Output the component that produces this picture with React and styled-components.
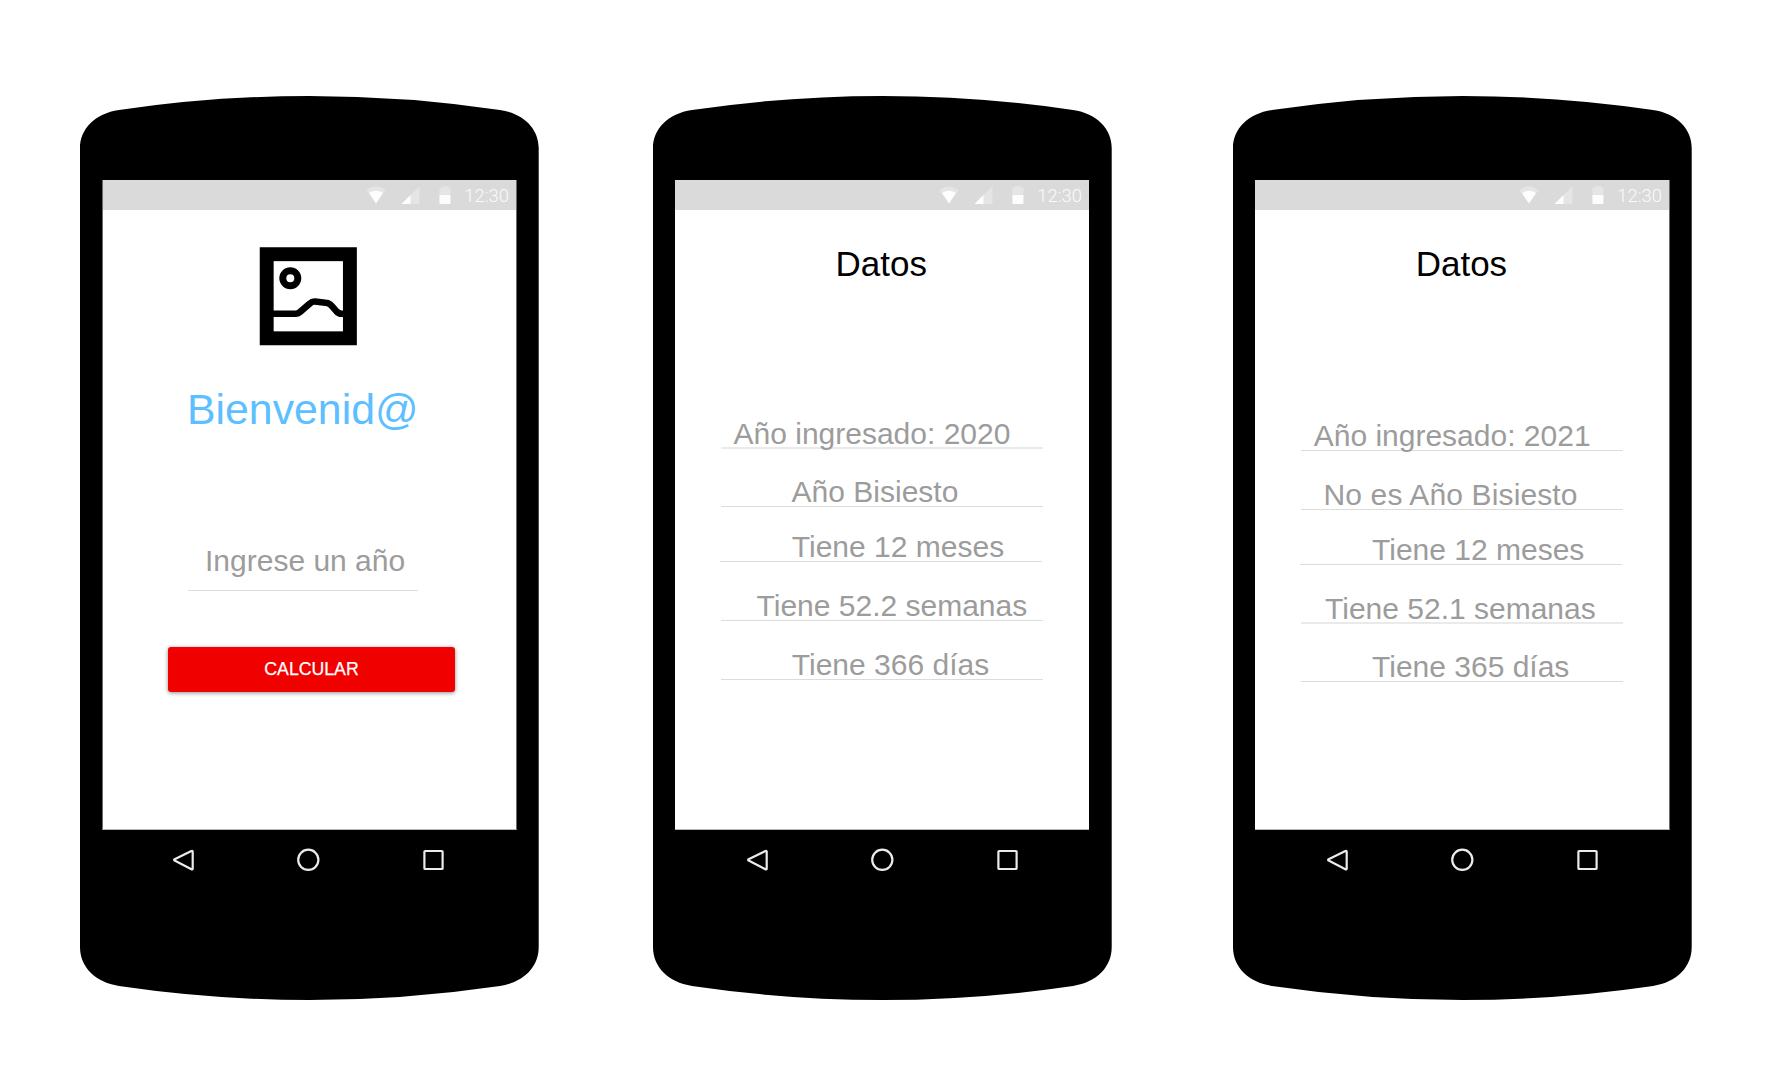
import React from "react";
import styled, { createGlobalStyle } from "styled-components";

const GlobalStyle = createGlobalStyle`
  * { box-sizing: border-box; }
  body { margin: 0; background: #fff; font-family: "Liberation Sans", Arial, sans-serif; }
`;

const Board = styled.main`
  display: flex;
  align-items: flex-start;
  width: 1779px;
  height: 1073px;
  padding: 96px 0 0 80px;
  overflow: hidden;
  background: #fff;
`;

const Phone = styled.section`
  flex: none;
  display: flex;
  flex-direction: column;
  width: 459px;
  height: 904px;
  margin-left: ${(p) => p.$gap}px;
  padding: 84px 0 0 22px;
  background: #000;
  clip-path: path("M0 52 C0 33 15 17.5 39 14 Q134 0 229.4 0 Q325 0 420 14 C444 17.5 458.7 33 458.7 52 V851 C458.7 871 444 886 420 890 Q325 904 229.4 904 Q134 904 39 890 C15 886 0 871 0 851 Z");
`;

const Screen = styled.div`
  display: flex;
  flex-direction: column;
  width: ${(p) => p.$width}px;
  height: 650px;
  background: #fff;
  border: 0 solid #6a6a6a;
  border-left-width: ${(p) => (p.$leftEdge ? 1 : 0)}px;
  border-right-width: ${(p) => (p.$rightEdge ? 1 : 0)}px;
  border-bottom: 1px solid #b5b8b5;
`;

const StatusBar = styled.header`
  flex: none;
  display: flex;
  justify-content: flex-end;
  height: 30px;
  padding: 6px 7px 0 0;
  background: #dadada;
  svg { display: block; flex: none; }
`;

const Signal = styled.svg`
  margin-left: 15px;
`;

const Battery = styled.svg`
  margin-left: 19px;
`;

const Clock = styled.time`
  margin-left: 13px;
  font: 300 18.4px/20px Roboto, sans-serif;
  color: #fafafa;
`;

const Welcome = styled.div`
  display: flex;
  flex-direction: column;
  align-items: flex-start;
`;

const Picture = styled.svg`
  display: block;
  margin: 37px 0 0 156px;
`;

const Greeting = styled.h1`
  margin: 39px 0 0 84px;
  font-size: 42.8px;
  line-height: 48px;
  font-weight: 400;
  color: #5dbfff;
`;

const YearField = styled.div`
  width: 230px;
  height: 47px;
  margin: 111px 0 0 85px;
  padding-left: 17px;
  font-size: 30px;
  line-height: 34px;
  color: #9c9c9c;
  border-bottom: 1px solid #dcdcdc;
`;

const CalculateButton = styled.button`
  width: 287px;
  height: 45px;
  margin: 56px 0 0 65px;
  padding: 0 0 2px;
  border: 0;
  border-radius: 3px;
  background: #f10000;
  box-shadow: 0 1px 4px rgba(0, 0, 0, 0.45);
  font: 400 17.7px/20px "Liberation Sans", Arial, sans-serif;
  -webkit-text-stroke: 0.25px #fff;
  color: #fff;
`;

const Title = styled.h1`
  margin: 34px 0 0 ${(p) => p.$indent}px;
  font-size: 35px;
  line-height: 40px;
  font-weight: 400;
  color: #000;
`;

const Results = styled.div`
  display: flex;
  flex-direction: column;
  padding: ${(p) => p.$top}px 0 0 46px;
`;

const Row = styled.div`
  display: flex;
  align-items: flex-end;
  width: 322.4px;
  height: ${(p) => p.$height}px;
  margin-left: ${(p) => p.$shift || 0}px;
  padding-left: ${(p) => p.$indent}px;
  border-bottom: ${(p) => p.$line}px solid ${(p) => (p.$line === 2 ? "#eaeaea" : "#dcdcdc")};
`;

const Value = styled.span`
  margin-bottom: ${(p) => p.$drop}px;
  font-size: 30px;
  line-height: 34px;
  letter-spacing: ${(p) => p.$spacing || 0}px;
  white-space: nowrap;
  color: #9c9c9c;
`;

const NavBar = styled.nav`
  display: flex;
  padding: 18px 0 0 ${(p) => p.$start}px;
  svg { display: block; }
`;

function Status() {
  return (
    <StatusBar>
      <svg width="20" height="18" viewBox="0 0 20 18" fill="#fff">
        <path d="M0.3 4.2Q10 -3.4 19.7 4.2L10 17.6Z" opacity=".3" />
        <path d="M3.1 7Q10 2.6 16.9 7L10 17.6Z" opacity=".95" />
      </svg>
      <Signal width="19" height="18" viewBox="0 0 19 18" fill="#fff">
        <path d="M0.5 18H18.5V0.3Z" opacity=".3" />
        <path d="M0.5 18H9.5V9.1Z" opacity=".95" />
      </Signal>
      <Battery width="12" height="18" viewBox="0 0 12 18" fill="#fff">
        <path d="M0.4 9V2.6Q0.4 1.4 2.6 1.4V0.3H9.2V1.4Q11.5 1.4 11.5 2.6V9Z" opacity=".3" />
        <path d="M0.4 9H11.5V16.8Q11.5 18 10.3 18H1.6Q0.4 18 0.4 16.8Z" opacity=".95" />
      </Battery>
      <Clock>12:30</Clock>
    </StatusBar>
  );
}

function Navigation({ start }) {
  return (
    <NavBar $start={start}>
      <svg width="274" height="24" viewBox="0 0 274 24" fill="none" stroke="#ebebeb" strokeWidth="2.2">
        <path d="M20.4 3.1Q21.7 2.3 21.7 3.8V20.4Q21.7 22 20.4 21.2L3.6 12.6Q2.6 11.9 3.6 11.2Z" strokeLinejoin="round" />
        <circle cx="137.3" cy="11.8" r="10.1" />
        <rect x="253.4" y="3" width="18.2" height="18" rx="0.8" />
      </svg>
    </NavBar>
  );
}

const leap = [
  { text: "Año ingresado: 2020", height: 42, indent: 12.5, drop: -4, line: 2 },
  { text: "Año Bisiesto", height: 58, indent: 70.6, drop: -3, line: 1 },
  { text: "Tiene 12 meses", height: 55, indent: 71.8, drop: -3, line: 1, shift: -1 },
  { text: "Tiene 52.2 semanas", height: 59, indent: 35.5, drop: -3, line: 1 },
  { text: "Tiene 366 días", height: 59, indent: 70.8, drop: -3, line: 1 },
];

const common = [
  { text: "Año ingresado: 2021", height: 42, indent: 12.7, drop: -3, line: 1 },
  { text: "No es Año Bisiesto", height: 59, indent: 22.5, drop: -3, line: 1, spacing: 0.13 },
  { text: "Tiene 12 meses", height: 55, indent: 72, drop: -3, line: 1, shift: -1 },
  { text: "Tiene 52.1 semanas", height: 59, indent: 24, drop: -4, line: 2 },
  { text: "Tiene 365 días", height: 58, indent: 71, drop: -3, line: 1 },
];

function DataPhone({ gap, width, rightEdge, titleIndent, top, rows }) {
  return (
    <Phone $gap={gap}>
      <Screen $width={width} $rightEdge={rightEdge}>
        <Status />
        <Title $indent={titleIndent}>Datos</Title>
        <Results $top={top}>
          {rows.map((r) => (
            <Row key={r.text} $height={r.height} $indent={r.indent} $shift={r.shift} $line={r.line}>
              <Value $drop={r.drop} $spacing={r.spacing}>{r.text}</Value>
            </Row>
          ))}
        </Results>
      </Screen>
      <Navigation start={70} />
    </Phone>
  );
}

export default function App() {
  return (
    <>
      <GlobalStyle />
      <Board>
        <Phone $gap={0}>
          <Screen $width={415} $leftEdge $rightEdge>
            <Status />
            <Welcome>
              <Picture width="98" height="99" viewBox="0 0 98 99" fill="none" stroke="#000">
                <rect x="7.7" y="7.2" width="83.2" height="84.1" strokeWidth="13.9" />
                <circle cx="31.3" cy="31.3" r="7.5" strokeWidth="7" />
                <path d="M14 66.8H36.5Q39 66.8 41 65L50.5 56.8Q53 54.3 56 54.5L66.5 55.7Q70.3 55.9 72.5 58.6L77.5 64.4Q79.8 66.8 82.5 66.8H84" strokeWidth="6.6" />
              </Picture>
              <Greeting>Bienvenid@</Greeting>
              <YearField>Ingrese un año</YearField>
              <CalculateButton>CALCULAR</CalculateButton>
            </Welcome>
          </Screen>
          <Navigation start={69} />
        </Phone>
        <DataPhone gap={114} width={414} titleIndent={160.5} top={123} rows={leap} />
        <DataPhone gap={121} width={415} rightEdge titleIndent={160.7} top={125} rows={common} />
      </Board>
    </>
  );
}
